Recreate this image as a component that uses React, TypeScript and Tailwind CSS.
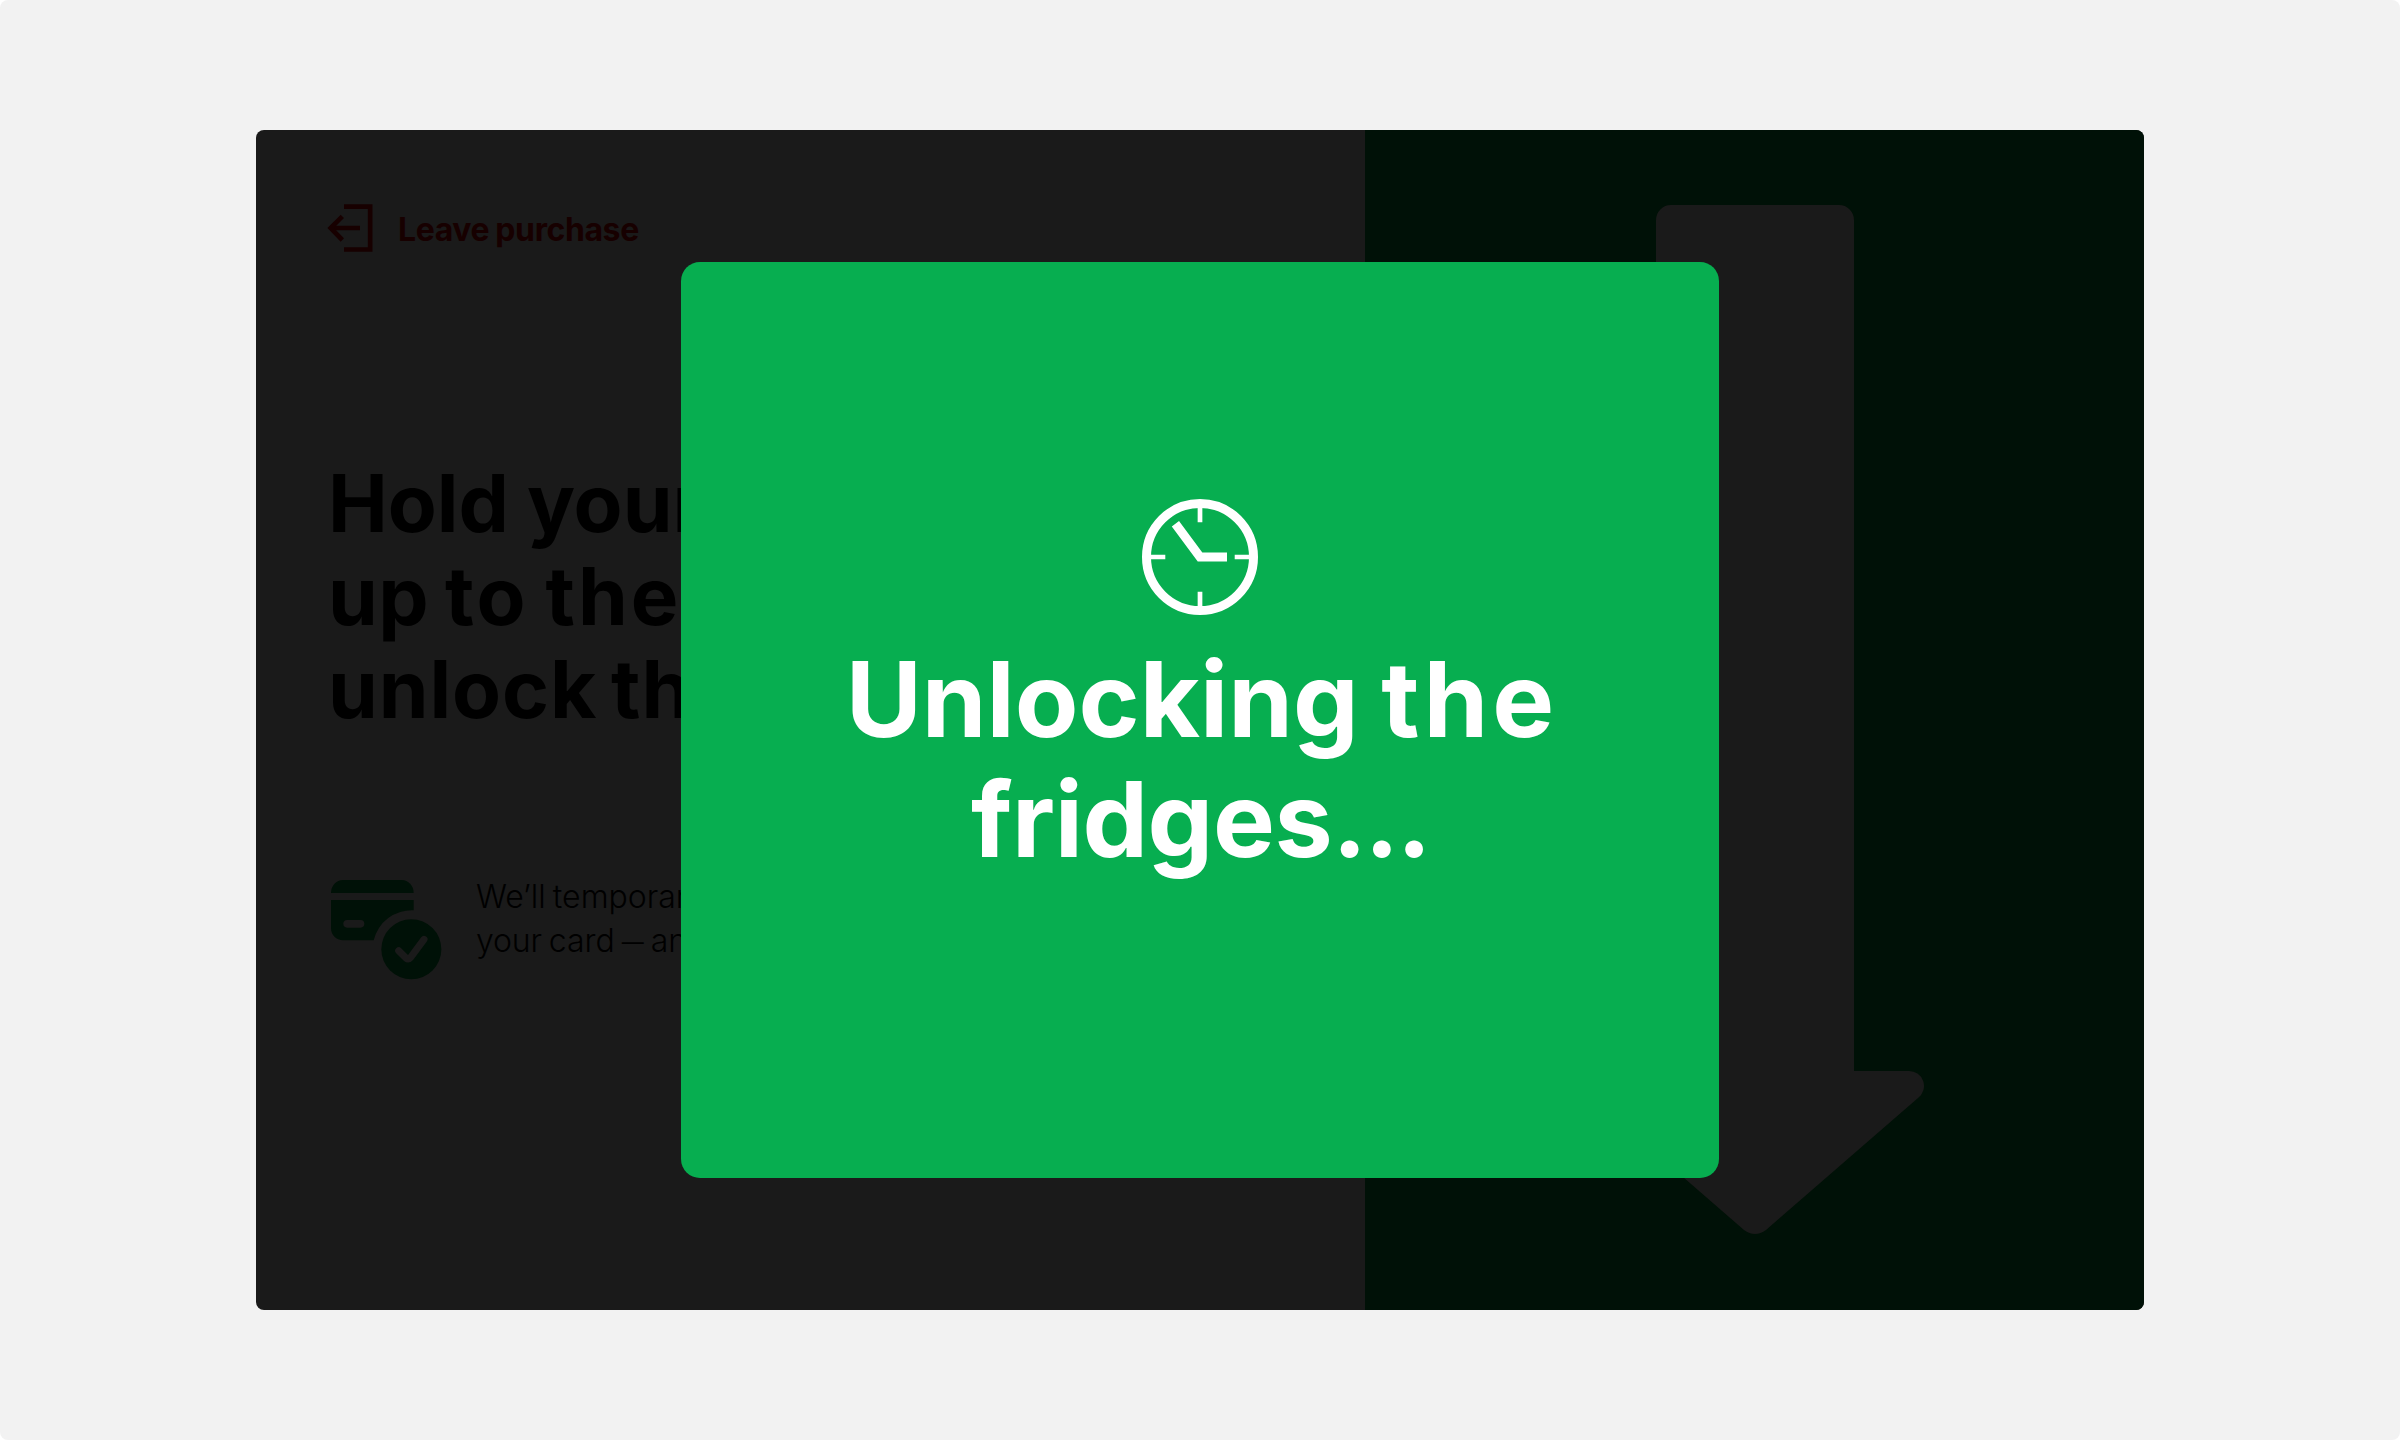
import React from 'react';

const LeaveIcon: React.FC = () => (
  <svg className="w-[46px] h-12 shrink-0" viewBox="51 43 138 144" fill="none" stroke="#170000">
    <path d="M102 51H180.5V179.5H102" strokeWidth="14" />
    <path d="M150 115H64" strokeWidth="14" />
    <path d="M97 80L62 115L97 151" strokeWidth="14" />
  </svg>
);

const CardIcon: React.FC = () => (
  <svg className="w-[111px] h-[100px] shrink-0" viewBox="62 59 333 300" fill="#001107">
    <path d="M62 98C62 76 78 59 98 59H274C294 59 310 76 310 98Z" />
    <path d="M62 119H310V150A117 117 0 0 0 190 240H98C78 240 62 224 62 204Z" />
    <rect x="99" y="179" width="63" height="23" rx="11.5" fill="#1a1a1a" />
    <circle cx="303" cy="267" r="90" />
    <path
      d="M265 271L287 293Q294 299 301 291L341 237"
      fill="none"
      stroke="#1a1a1a"
      strokeWidth="21"
      strokeLinecap="round"
      strokeLinejoin="round"
    />
  </svg>
);

const ArrowDown: React.FC = () => (
  <svg className="w-[340px] h-[1030px]" viewBox="0 0 340 1030" fill="#1a1a1a">
    <path d="M71 15A15 15 0 0 1 86 0H254A15 15 0 0 1 269 15V866H323.5A15 15 0 0 1 333 893L181 1025Q170 1033 159 1025L7 893A15 15 0 0 1 16.5 866H71Z" />
  </svg>
);

const ClockIcon: React.FC = () => (
  <svg className="w-[116px] h-[116px] shrink-0" viewBox="-58 -58 116 116" fill="none" stroke="#fff">
    <circle r="53.5" strokeWidth="9" />
    <path d="M0 -50V-34.7M0 50V34.7M-50 0H-34.7M50 0H34.7" strokeWidth="4.7" />
    <path d="M-24.6 -33.2L0 0H27" strokeWidth="9" />
  </svg>
);

const App: React.FC = () => {
  return (
    <div className="bg-white">
      <main className="flex h-[1440px] w-[2400px] items-center justify-center rounded-lg bg-[#f2f2f2] font-['Inter',sans-serif]">
        <div className="relative flex h-[1180px] w-[1888px] overflow-hidden rounded-lg bg-[#1a1a1a]">
          {/* Instructions */}
          <section className="w-[1109px] whitespace-nowrap pl-[71px] pt-[74px] text-black">
            <div className="flex h-12 items-center gap-[25px] text-[32px] font-bold text-[#170000]">
              <LeaveIcon />
              <span className="pt-[3px] tracking-[-0.4px] [word-spacing:-1px]">Leave purchase</span>
            </div>
            <h1 className="mt-[204px] pl-px text-[80px] leading-[93px] font-bold">
              <span className="[word-spacing:-1px]">Hold your</span><br />
              <span className="tracking-[0.4px]">up</span>{' '}
              <span className="-ml-[3px] tracking-[3px]">to</span>
              <span className="-ml-[5px] tracking-[3px]"> the</span><br />
              <span className="tracking-[0.9px] [word-spacing:-6px]">unlock the</span>
            </h1>
            <div className="mt-[145px] flex gap-[34px] pl-[4px]">
              <CardIcon />
              <p className="-mt-[5px] text-[32px] leading-[44px] font-light [word-spacing:-2px]">
                We’ll temporarily<br />
                <span className="tracking-[-0.2px]">your</span> card{' '}
                <span className="relative -top-0.5 text-[22px] font-normal">—</span> and
              </p>
            </div>
          </section>

          {/* Direction panel */}
          <aside className="flex flex-1 justify-center bg-[#001107] pt-[75px]">
            <ArrowDown />
          </aside>

          {/* Status dialog */}
          <div className="absolute inset-0 flex items-center justify-center">
            <div className="flex h-[916px] w-[1038px] flex-col items-center rounded-[19px] bg-[#07ae50] pt-[237px] text-white">
              <ClockIcon />
              <p className="mt-[24px] text-center text-[104px] leading-[120px] font-bold whitespace-nowrap">
                <span className="[word-spacing:-2px]">Unlocking </span>
                <span className="-mr-1 tracking-[4px]">the</span><br />
                <span className="tracking-[-0.4px]">fridges</span>
                <span className="tracking-[-2.5px]">...</span>
              </p>
            </div>
          </div>
        </div>
      </main>
    </div>
  );
};

export default App;
